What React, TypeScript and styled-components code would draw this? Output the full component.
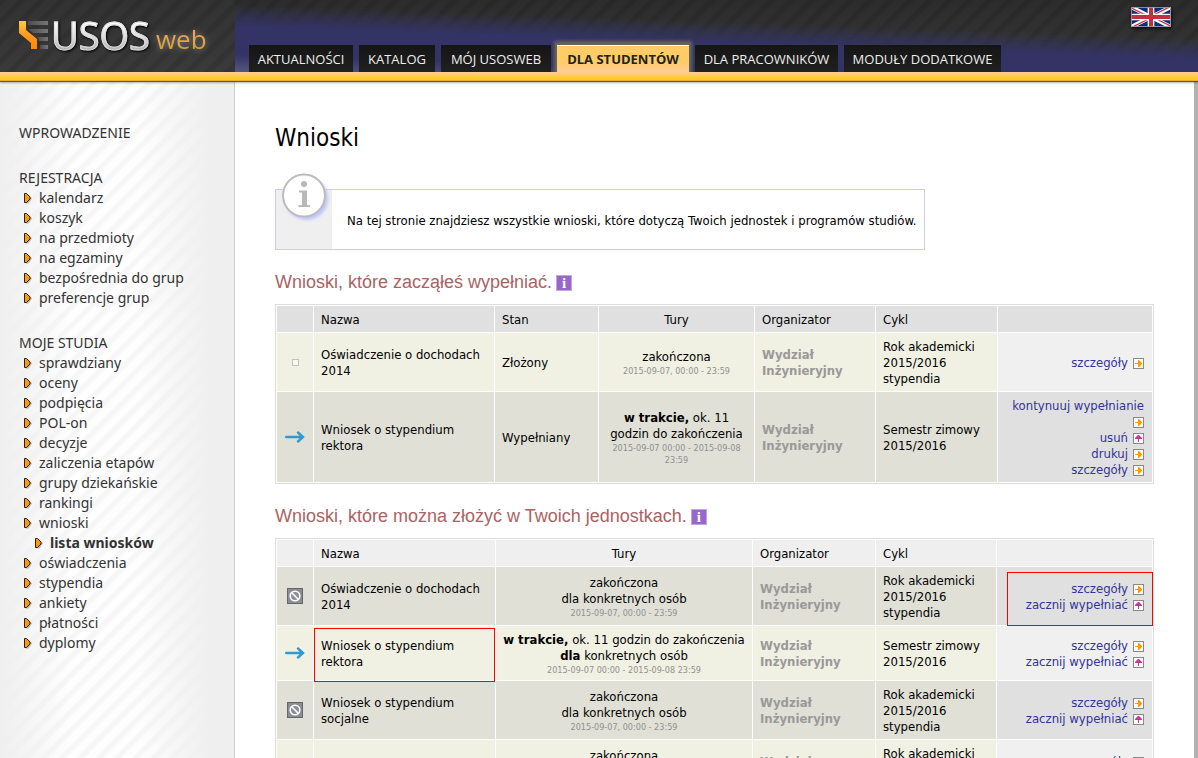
import React from 'react';
import styled, { createGlobalStyle, css } from 'styled-components';

const GlobalStyle = createGlobalStyle`
  *, *::before, *::after { box-sizing: border-box; }
  body {
    margin: 0;
    background: #b2b2b2;
    color: #000;
    font: 13px/16px 'DejaVu Sans Condensed', Tahoma, sans-serif;
  }
  a { color: inherit; text-decoration: none; }
  h1, h2, p, ul { margin: 0; padding: 0; font-weight: normal; }
`;

const uiFont = css`font-family: 'Open Sans', 'Segoe UI', sans-serif;`;

const Page = styled.div`
  display: flex;
  flex-direction: column;
  height: 100vh;
  overflow: hidden;
`;

const Header = styled.header`
  display: flex;
  flex: none;
  height: 82px;
  border-bottom: 1px solid #55555f;
  box-shadow: 0 1px 2px rgba(0, 0, 0, 0.3);
  background: linear-gradient(#ffcc99, #ffcc66 3px, #ffcc33 5px, #ffc62b 8px, #cf9c30) bottom / 100% 9px no-repeat, #333;
  position: relative;
`;

const stripes = 'repeating-linear-gradient(135deg, rgba(0,0,0,.1) 0 3px, transparent 6px 12px, rgba(0,0,0,.1) 14px)';

const Brand = styled.a`
  ${uiFont}
  display: flex;
  align-items: flex-start;
  flex: none;
  width: 235px;
  height: 72px;
  padding: 15px 0 0 18px;
  background: ${stripes}, linear-gradient(#323232, #3a3a3a);
`;

const BrandMark = styled.svg`
  margin-top: 4px;
`;

const BrandName = styled.span`
  font-size: 38px;
  line-height: 40px;
  background: linear-gradient(#fff 20%, #dcdcdc 55%, #b4b4b4 85%);
  background-clip: text;
  color: transparent;
  -webkit-text-stroke: 1px #dddddd;
  filter: drop-shadow(1px 1px 1px #000);
`;

const BrandSuffix = styled.span`
  margin-top: 9px;
  margin-left: 6px;
  font-size: 26px;
  line-height: 30px;
  background: linear-gradient(#ff9966 20%, #e2a840 55%, #cc9933);
  background-clip: text;
  color: transparent;
  filter: drop-shadow(0 0 3px rgba(255, 255, 255, 0.4));
`;

const HeaderBar = styled.div`
  display: flex;
  flex: 1;
  align-items: flex-end;
  height: 72px;
  padding-left: 14px;
  position: relative;
  background:
    linear-gradient(182deg, transparent 38px, #333366 60px, #333366 88px, #565680),
    ${stripes},
    linear-gradient(#2c2c2c, #383838);
`;

const Tabs = styled.nav`
  ${uiFont}
  display: flex;
  gap: 6px;
`;

const Tab = styled.a<{ $active?: boolean; $width: number }>`
  width: ${p => p.$width}px;
  height: 27px;
  padding-top: 1px;
  line-height: 27px;
  font-size: 13px;
  text-align: center;
  white-space: nowrap;
  color: #eee;
  background: linear-gradient(#151515, #202020);
  ${p => p.$active && css`
    color: #222;
    font-weight: bold;
    background: linear-gradient(#ffcc66 60%, #ffcc99);
    border-top: 1px solid #fff;
    padding-top: 0;
    box-shadow: 0 -1px 3px 3px #66665c;
    clip-path: inset(-8px -8px 0 -8px);
  `}
`;

const Language = styled.a`
  position: absolute;
  top: 7px;
  right: 27px;
  height: 20px;
  line-height: 0;
  box-shadow: 1px 2px 3px #111;
`;

const Body = styled.div`
  display: flex;
  flex: 1;
  min-height: 0;
`;

const Sidebar = styled.nav`
  flex: none;
  width: 235px;
  padding: 41px 18px 0 19px;
  border-right: 1px solid #ccc;
  font-family: 'Noto Sans', 'Segoe UI', sans-serif;
  font-size: 14px;
  line-height: 20px;
  color: #333;
  background:
    linear-gradient(90deg, #efefef, rgba(255,255,255,0) 30%, rgba(255,255,255,0) 60%, #efefef 90%),
    repeating-linear-gradient(135deg, #f6f6f6 0 3px, #fefefe 6px 11px, #f6f6f6 13px);
`;

const MenuGroup = styled.section`
  & + & { margin-top: 25px; }
`;

const MenuTitle = styled.a`
  display: block;
  text-transform: uppercase;
`;

const MenuList = styled.ul`
  list-style: none;
`;

const MenuItem = styled.li<{ $nested?: boolean }>`
  display: flex;
  align-items: center;
  gap: 5px;
  height: 20px;
  padding-left: ${p => (p.$nested ? 15 : 4)}px;
  font-weight: ${p => (p.$nested ? 'bold' : 'normal')};
  white-space: nowrap;
`;

const Main = styled.main`
  flex: 1;
  min-width: 0;
  margin-right: 4px;
  padding: 41px 40px 0;
  background: #fff;
  overflow: hidden;
`;

const Title = styled.h1`
  font-size: 24px;
  line-height: 30px;
`;

const Notice = styled.aside`
  display: flex;
  align-items: center;
  position: relative;
  max-width: 650px;
  height: 61px;
  margin-top: 36px;
  padding-top: 2px;
  padding-left: 71px;
  border: 1px solid #ccccee;
  background: linear-gradient(#efefef, #efefef) left / 56px 100% no-repeat #fff;
`;

const NoticeBadge = styled.svg`
  position: absolute;
  top: -18px;
  left: 3px;
`;

const SectionTitle = styled.h2`
  display: flex;
  align-items: center;
  gap: 4px;
  margin: 21px 0 11px;
  font-family: 'Liberation Sans', Arial, sans-serif;
  font-size: 18px;
  line-height: 22px;
  color: #ad6163;
`;

const HelpButton = styled.button`
  width: 16px;
  height: 16px;
  margin-top: 2px;
  padding: 0;
  border: 1px solid #bbaadd;
  background: #9966cc;
  color: #fff;
  font: bold 15px/14px 'Liberation Serif', serif;
`;

const Table = styled.table`
  width: 100%;
  table-layout: fixed;
  border: 1px solid #ddd;
  border-collapse: separate;
  border-spacing: 1px;
  background: #fff;
`;

const Col = styled.col<{ $width?: number }>`
  width: ${p => (p.$width ? `${p.$width}px` : 'auto')};
`;

const HeadCell = styled.th<{ $dark?: boolean; $center?: boolean }>`
  padding: 6px 7px 4px;
  font-weight: normal;
  text-align: ${p => (p.$center ? 'center' : 'left')};
  background: ${p => (p.$dark ? '#e0e0e0' : '#efefef')};
`;

type CellKind = 'icon' | 'text' | 'center' | 'owner' | 'actions';

const Cell = styled.td<{ $dark?: boolean; $kind?: CellKind }>`
  position: relative;
  padding: 6px 7px 4px;
  vertical-align: middle;
  background: ${p => (p.$dark ? '#e0e0d7' : '#f0f0e3')};
  ${p => p.$kind === 'icon' && css`padding: 0; text-align: center; line-height: 0;`}
  ${p => p.$kind === 'center' && css`text-align: center;`}
  ${p => p.$kind === 'owner' && css`color: #999; font-weight: bold;`}
  ${p => p.$kind === 'actions' && css`
    padding-right: 8px;
    padding-left: 0;
    text-align: right;
    color: #333399;
    background: ${p.$dark ? '#e0e0e0' : '#f0f0f0'};
  `}
`;

const Dates = styled.div`
  font-size: 9px;
  line-height: 12px;
  color: #909090;
`;

const Action = styled.a`
  display: flex;
  flex-wrap: wrap;
  justify-content: flex-end;
  align-items: center;
  column-gap: 5px;
  line-height: 16px;
`;

const IconSlot = styled.span`
  display: flex;
  align-items: center;
  height: 16px;
`;

const Highlight = styled.span<{ $area: 'name' | 'actions' }>`
  position: absolute;
  z-index: 1;
  border: 1px solid #ff0000;
  pointer-events: none;
  ${p => (p.$area === 'name'
    ? css`inset: 2px 0 -2px 0;`
    : css`inset: 5px -1px -1px 10px;`)}
`;

const Bullet = () => (
  <svg width="11" height="14" viewBox="0 0 11 14" aria-hidden="true">
    <path d="M2.500 3.500H5.500L9 7.500 5.500 12.500H2.500Z" fill="#000" opacity=".25" />
    <path d="M1.500 2.500H3.500L7 6V8L3.500 11.500H1.500Z" fill="#ff9900" stroke="#222" />
  </svg>
);

const GoIcon = () => (
  <svg width="11" height="11" viewBox="0 0 11 11" aria-hidden="true">
    <rect x=".5" y=".5" width="10" height="10" fill="#fff" stroke="#888" />
    <path d="M2 5h3V2h1l3 3v1L6 9H5V6H2z" fill="#ff9900" />
  </svg>
);

const UpIcon = () => (
  <svg width="11" height="11" viewBox="0 0 11 11" aria-hidden="true">
    <rect x=".5" y=".5" width="10" height="10" fill="#fff" stroke="#888" />
    <path d="M5 9V6H2V5l3-3h1l3 3v1H6v3z" fill="#cc3399" />
  </svg>
);

const ArrowIcon = () => (
  <svg width="20" height="12" viewBox="0 0 20 12" role="img" aria-label="otwarte">
    <path d="M1.2 6H17.5M13 1.500L18 6l-5 4.500" fill="none" stroke="#3399cc" strokeWidth="2.4" strokeLinecap="round" />
  </svg>
);

const BlockedIcon = () => (
  <svg width="16" height="16" viewBox="0 0 16 16" role="img" aria-label="zamknięte">
    <rect x=".5" y=".5" width="15" height="15" fill="#8c8c98" stroke="#666" />
    <circle cx="8" cy="8" r="4.8" fill="none" stroke="#fff" strokeWidth="1.6" />
    <path d="M4.8 4.8l6.4 6.4" stroke="#fff" strokeWidth="1.6" />
  </svg>
);

const EmptyIcon = () => (
  <svg width="7" height="7" viewBox="0 0 7 7" role="img" aria-label="złożony">
    <rect x=".5" y=".5" width="6" height="6" fill="#fff" fillOpacity=".5" stroke="#c0c0c0" />
  </svg>
);

const Logo = () => (
  <BrandMark width="33" height="32" viewBox="0 0 33 32" aria-hidden="true">
    <defs>
      <linearGradient id="mark" x1="0" y1="0" x2="0" y2="1">
        <stop offset="0" stopColor="#ffcc33" />
        <stop offset=".5" stopColor="#ff9922" />
        <stop offset="1" stopColor="#ff8800" />
      </linearGradient>
      <linearGradient id="bars" x1="0" y1="0" x2="1" y2="0">
        <stop offset="0" stopColor="#4c4c4c" />
        <stop offset="1" stopColor="#777" />
      </linearGradient>
    </defs>
    <path d="M1 2h7v9l11 9v10h-6v-6L1 14z" fill="url(#mark)" />
    <g fill="url(#bars)">
      <path d="M10 2h20v4H10z" />
      <path d="M10 10h20v4H15z" />
      <path d="M19 18h11v4h-9v-2z" />
      <path d="M22 26h8v4h-8z" />
    </g>
  </BrandMark>
);

const Flag = () => (
  <svg width="40" height="20" viewBox="0 0 60 30" preserveAspectRatio="none" role="img" aria-label="English">
    <clipPath id="flagHalves"><path d="M30 15h30v15zM30 15v15H0zM30 15H0V0zM30 15V0h30z" /></clipPath>
    <path d="M0 0h60v30H0z" fill="#0a2f7c" />
    <path d="M0 0l60 30M60 0L0 30" stroke="#fff" strokeWidth="6" />
    <path d="M0 0l60 30M60 0L0 30" clipPath="url(#flagHalves)" stroke="#cc3344" strokeWidth="4" />
    <path d="M30 0v30M0 15h60" stroke="#fff" strokeWidth="10" />
    <path d="M30 0v30M0 15h60" stroke="#c4303e" strokeWidth="6" />
    <path d="M.7.7h58.6v28.6H.7z" fill="none" stroke="#99a" strokeWidth="1.4" />
  </svg>
);

const InfoBadge = () => (
  <NoticeBadge width="52" height="52" viewBox="0 0 52 52" aria-hidden="true">
    <defs>
      <filter id="soft" x="-20%" y="-20%" width="140%" height="140%"><feGaussianBlur stdDeviation="1.4" /></filter>
    </defs>
    <circle cx="27.500" cy="26.500" r="21.500" fill="#bfc4ff" filter="url(#soft)" />
    <circle cx="25" cy="23.500" r="21" fill="#fff" stroke="#bbb" strokeWidth="2" />
    <circle cx="25" cy="12" r="3" fill="#b8b8b8" />
    <path d="M20 18.500h8v14.500h3v2H19.500v-2h3.500V20.500h-3z" fill="#b8b8b8" />
  </NoticeBadge>
);

const tabs = [
  { label: 'AKTUALNOŚCI', width: 104 },
  { label: 'KATALOG', width: 76 },
  { label: 'MÓJ USOSWEB', width: 110 },
  { label: 'DLA STUDENTÓW', width: 132, active: true },
  { label: 'DLA PRACOWNIKÓW', width: 143 },
  { label: 'MODUŁY DODATKOWE', width: 157 },
];

const menu: { title: string; items: { label: string; nested?: boolean }[] }[] = [
  { title: 'Wprowadzenie', items: [] },
  {
    title: 'Rejestracja',
    items: ['kalendarz', 'koszyk', 'na przedmioty', 'na egzaminy', 'bezpośrednia do grup', 'preferencje grup'].map(label => ({ label })),
  },
  {
    title: 'Moje studia',
    items: [
      ...['sprawdziany', 'oceny', 'podpięcia', 'POL-on', 'decyzje', 'zaliczenia etapów', 'grupy dziekańskie', 'rankingi', 'wnioski'].map(label => ({ label })),
      { label: 'lista wniosków', nested: true },
      ...['oświadczenia', 'stypendia', 'ankiety', 'płatności', 'dyplomy'].map(label => ({ label })),
    ],
  },
];

type ActionData = { label: string; up?: boolean };

const Actions = ({ items }: { items: ActionData[] }) => (
  <>
    {items.map(item => (
      <Action href="#" key={item.label}>
        <span>{item.label}</span>
        <IconSlot>{item.up ? <UpIcon /> : <GoIcon />}</IconSlot>
      </Action>
    ))}
  </>
);

const started = [
  {
    icon: <EmptyIcon />,
    name: 'Oświadczenie o dochodach 2014',
    state: 'Złożony',
    rounds: <>zakończona<Dates>2015-09-07, 00:00 - 23:59</Dates></>,
    cycle: 'Rok akademicki 2015/2016 stypendia',
    actions: [{ label: 'szczegóły' }],
  },
  {
    icon: <ArrowIcon />,
    name: 'Wniosek o stypendium rektora',
    state: 'Wypełniany',
    rounds: <><b>w trakcie,</b> ok. 11 godzin do zakończenia<Dates>2015-09-07 00:00 - 2015-09-08 23:59</Dates></>,
    cycle: 'Semestr zimowy 2015/2016',
    actions: [{ label: 'kontynuuj wypełnianie' }, { label: 'usuń', up: true }, { label: 'drukuj' }, { label: 'szczegóły' }],
  },
];

const closedRounds = <>zakończona<br />dla konkretnych osób<Dates>2015-09-07, 00:00 - 23:59</Dates></>;
const fillActions = [{ label: 'szczegóły' }, { label: 'zacznij wypełniać', up: true }];

const available = [
  {
    icon: <BlockedIcon />,
    name: 'Oświadczenie o dochodach 2014',
    rounds: closedRounds,
    cycle: 'Rok akademicki 2015/2016 stypendia',
    markActions: true,
  },
  {
    icon: <ArrowIcon />,
    name: 'Wniosek o stypendium rektora',
    rounds: <><b>w trakcie,</b> ok. 11 godzin do zakończenia<br /><b>dla</b> konkretnych osób<Dates>2015-09-07 00:00 - 2015-09-08 23:59</Dates></>,
    cycle: 'Semestr zimowy 2015/2016',
    markName: true,
  },
  {
    icon: <BlockedIcon />,
    name: 'Wniosek o stypendium socjalne',
    rounds: closedRounds,
    cycle: 'Rok akademicki 2015/2016 stypendia',
  },
  {
    icon: <BlockedIcon />,
    name: 'Zapomoga',
    rounds: closedRounds,
    cycle: 'Rok akademicki 2015/2016 stypendia',
  },
];

export default function App() {
  return (
    <>
      <GlobalStyle />
      <Page>
        <Header>
          <Brand href="#">
            <Logo />
            <BrandName>USOS</BrandName>
            <BrandSuffix>web</BrandSuffix>
          </Brand>
          <HeaderBar>
            <Tabs>
              {tabs.map(tab => (
                <Tab href="#" key={tab.label} $width={tab.width} $active={tab.active}>{tab.label}</Tab>
              ))}
            </Tabs>
            <Language href="#"><Flag /></Language>
          </HeaderBar>
        </Header>
        <Body>
          <Sidebar>
            {menu.map(group => (
              <MenuGroup key={group.title}>
                <MenuTitle href="#">{group.title}</MenuTitle>
                <MenuList>
                  {group.items.map(item => (
                    <MenuItem key={item.label} $nested={item.nested}>
                      <Bullet />
                      <a href="#">{item.label}</a>
                    </MenuItem>
                  ))}
                </MenuList>
              </MenuGroup>
            ))}
          </Sidebar>
          <Main>
            <Title>Wnioski</Title>
            <Notice>
              <InfoBadge />
              <p>Na tej stronie znajdziesz wszystkie wnioski, które dotyczą Twoich jednostek i programów studiów.</p>
            </Notice>

            <SectionTitle>
              Wnioski, które zacząłeś wypełniać.
              <HelpButton type="button">i</HelpButton>
            </SectionTitle>
            <Table>
              <colgroup>
                <Col $width={36} /><Col $width={180} /><Col $width={103} /><Col $width={155} /><Col $width={120} /><Col $width={121} /><Col />
              </colgroup>
              <thead>
                <tr>
                  <HeadCell $dark />
                  <HeadCell $dark>Nazwa</HeadCell>
                  <HeadCell $dark>Stan</HeadCell>
                  <HeadCell $dark $center>Tury</HeadCell>
                  <HeadCell $dark>Organizator</HeadCell>
                  <HeadCell $dark>Cykl</HeadCell>
                  <HeadCell $dark />
                </tr>
              </thead>
              <tbody>
                {started.map((row, i) => {
                  const dark = i % 2 === 1;
                  return (
                    <tr key={row.name}>
                      <Cell $dark={dark} $kind="icon">{row.icon}</Cell>
                      <Cell $dark={dark}>{row.name}</Cell>
                      <Cell $dark={dark}>{row.state}</Cell>
                      <Cell $dark={dark} $kind="center">{row.rounds}</Cell>
                      <Cell $dark={dark} $kind="owner">Wydział Inżynieryjny</Cell>
                      <Cell $dark={dark}>{row.cycle}</Cell>
                      <Cell $dark={dark} $kind="actions"><Actions items={row.actions} /></Cell>
                    </tr>
                  );
                })}
              </tbody>
            </Table>

            <SectionTitle>
              Wnioski, które można złożyć w Twoich jednostkach.
              <HelpButton type="button">i</HelpButton>
            </SectionTitle>
            <Table>
              <colgroup>
                <Col $width={36} /><Col $width={181} /><Col $width={256} /><Col $width={122} /><Col $width={120} /><Col />
              </colgroup>
              <thead>
                <tr>
                  <HeadCell />
                  <HeadCell>Nazwa</HeadCell>
                  <HeadCell $center>Tury</HeadCell>
                  <HeadCell>Organizator</HeadCell>
                  <HeadCell>Cykl</HeadCell>
                  <HeadCell />
                </tr>
              </thead>
              <tbody>
                {available.map((row, i) => {
                  const dark = i % 2 === 0;
                  return (
                    <tr key={row.name}>
                      <Cell $dark={dark} $kind="icon">{row.icon}</Cell>
                      <Cell $dark={dark}>
                        {row.name}
                        {row.markName && <Highlight $area="name" />}
                      </Cell>
                      <Cell $dark={dark} $kind="center">{row.rounds}</Cell>
                      <Cell $dark={dark} $kind="owner">Wydział Inżynieryjny</Cell>
                      <Cell $dark={dark}>{row.cycle}</Cell>
                      <Cell $dark={dark} $kind="actions">
                        <Actions items={fillActions} />
                        {row.markActions && <Highlight $area="actions" />}
                      </Cell>
                    </tr>
                  );
                })}
              </tbody>
            </Table>
          </Main>
        </Body>
      </Page>
    </>
  );
}
